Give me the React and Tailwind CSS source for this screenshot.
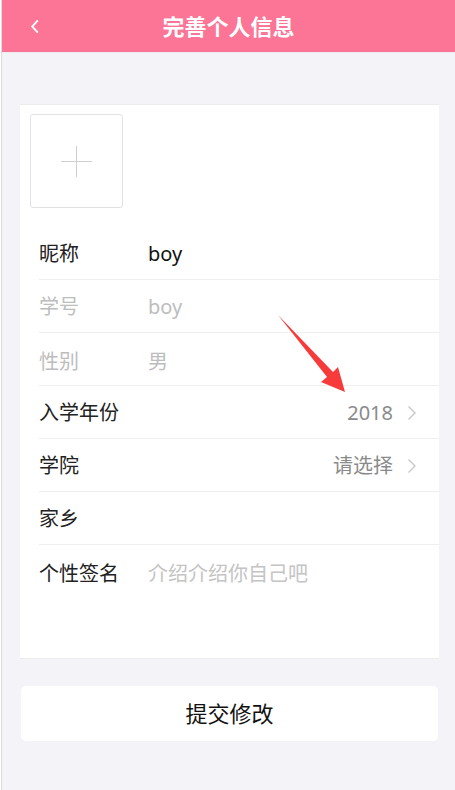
import React from "react";

const font = "font-['Noto_Sans','Noto_Sans_CJK_SC',sans-serif]";

function Chevron({ className }) {
  return (
    <svg viewBox="0 0 10 16" className={className} fill="none">
      <path d="M1.5 1.5 L8 8 L1.5 14.5" stroke="currentColor" strokeWidth="1.4" />
    </svg>
  );
}

function Row({ label, value, labelClass = "text-[#222]", valueClass = "text-[#111]", right, extra = "" }) {
  return (
    <div className={`ml-[19px] h-[53px] flex items-center border-b border-[#efefef] pt-[2px] ${extra}`}>
      <div className={`w-[109px] text-[20px] leading-[28px] ${labelClass}`}>{label}</div>
      <div className={`flex-1 text-[20px] leading-[28px] ${valueClass}`}>{value}</div>
      {right && (
        <div className="flex items-center pr-[22px]">
          <span className="text-[20px] leading-[28px] text-[#8a8a8a]">{right}</span>
          <Chevron className="ml-[14px] w-[10px] h-[16px] text-[#c8c8c8]" />
        </div>
      )}
    </div>
  );
}

export default function App() {
  return (
    <div className={`relative w-[455px] h-[790px] flex bg-white overflow-hidden ${font}`}>
      <div className="w-px" />
      <div className="w-px bg-[#dcdcdc]" />
      <div className="flex-1 flex flex-col bg-[#f4f4f8]">
        <div className="h-[53px] flex items-center bg-[#fc7496] border-b border-[#ececf0] relative">
          <div className="w-[56px] flex items-center pl-[28px]">
            <svg viewBox="0 0 10 16" className="w-[10px] h-[15px] text-white" fill="none">
              <path d="M8 1.5 L2 8 L8 14.5" stroke="currentColor" strokeWidth="2" />
            </svg>
          </div>
          <div className="flex-1 text-center pr-[56px] text-white text-[22px] leading-[30px] font-semibold">
            完善个人信息
          </div>
        </div>

        <div className="mt-[51px] ml-[18px] mr-[16px] bg-white border-t border-b border-[#ececec] flex flex-col">
          <div className="pl-[10px] pt-[9px]">
            <div className="w-[93px] h-[94px] rounded-[3px] border border-[#e2e2e2] flex items-center justify-center">
              <svg viewBox="0 0 31 31" className="w-[31px] h-[31px]">
                <path d="M15.5 0 V31 M0 15.5 H31" stroke="#cfcfcf" strokeWidth="1" />
              </svg>
            </div>
          </div>
          <div className="mt-[19px]">
            <Row label="昵称" value="boy" />
            <Row label="学号" value="boy" labelClass="text-[#bdbdbd]" valueClass="text-[#bdbdbd]" />
            <Row label="性别" value="男" labelClass="text-[#bdbdbd]" valueClass="text-[#bdbdbd]" extra="pt-[6px]" />
            <Row label="入学年份" value="" right="2018" />
            <Row label="学院" value="" right="请选择" />
            <Row label="家乡" value="" />
            <div className="ml-[19px] h-[113px] flex items-start pt-[15px]">
              <div className="w-[109px] text-[20px] leading-[28px] text-[#222]">个性签名</div>
              <div className="flex-1 text-[20px] leading-[28px] text-[#c4c4c4]">介绍介绍你自己吧</div>
            </div>
          </div>
        </div>

        <div className="mt-[27px] ml-[19px] mr-[17px] h-[55px] rounded-[5px] bg-white flex items-center justify-center text-[22px] text-[#111]">
          提交修改
        </div>
      </div>

      <svg className="absolute left-0 top-0 w-[455px] h-[790px] pointer-events-none" viewBox="0 0 455 790">
        <polygon
          points="278,315 333,372 338,367 345,392 321,382 327,377"
          fill="#f73b3b"
        />
      </svg>
    </div>
  );
}
